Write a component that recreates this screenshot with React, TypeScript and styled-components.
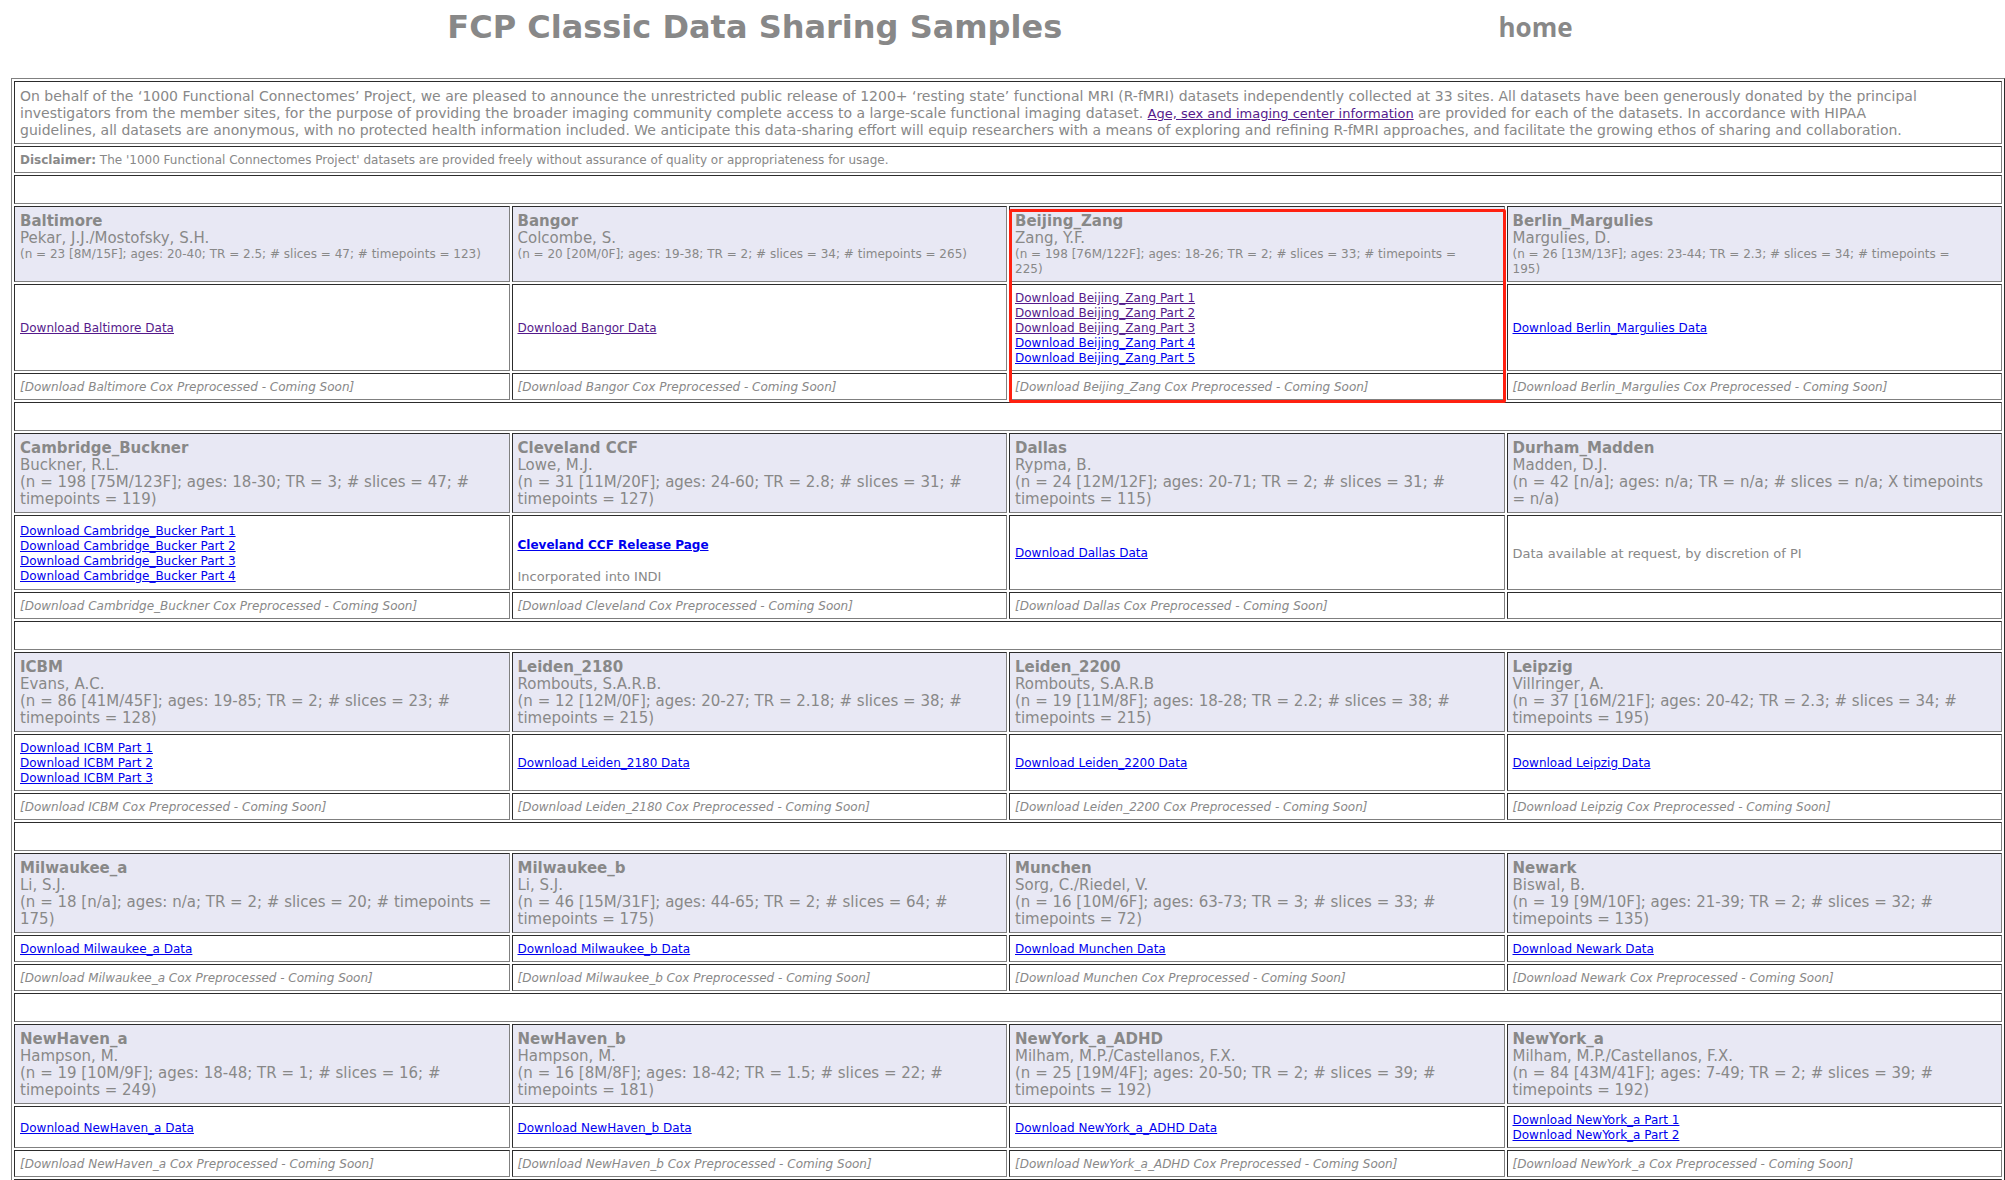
import React from "react";
import styled, { createGlobalStyle } from "styled-components";

const ink = "#888888";
const dark = "#2c2c2c";
const light = "#808080";

const GlobalStyle = createGlobalStyle`
  body {
    margin: 0;
    background: #ffffff;
    color: ${ink};
    font-family: Verdana, "DejaVu Sans", sans-serif;
    font-size: 14px;
    line-height: 17px;
  }
`;

const Page = styled.main`
  height: 100vh;
  box-sizing: border-box;
  padding-left: 11px;
  overflow-y: auto;
  scrollbar-width: none;
`;

const Header = styled.header`
  display: grid;
  grid-template-columns: 74.6% 1fr;
  align-items: center;
  height: 53px;
  margin-bottom: 25px;
`;

const Title = styled.h1`
  margin: 0;
  text-align: center;
  font-size: 32px;
  line-height: 40px;
`;

const HomeLink = styled.a`
  color: ${ink};
  font-family: "Open Sans", sans-serif;
  font-size: 26px;
  font-weight: 700;
  line-height: 40px;
  text-decoration: none;
`;

const Sites = styled.table`
  width: 100%;
  table-layout: fixed;
  border: 1px solid;
  border-color: ${light} ${dark} ${dark} ${light};
  border-collapse: separate;
  border-spacing: 2px;
`;

const Cell = styled.td`
  padding: 6px 5px 4px;
  border: 1px solid;
  border-color: ${dark} ${light} ${light} ${dark};
  vertical-align: middle;
`;

const Small = styled.div`
  font-size: 12px;
  line-height: 15px;
`;

const Spacer = styled(Cell)`
  height: 17px;
`;

const SiteCell = styled(Cell).attrs({ as: "th", scope: "col" })`
  position: relative;
  background: #e8e8f4;
  font-size: 15px;
  font-weight: 400;
  text-align: left;
  vertical-align: top;
`;

const Details = styled.div<{ $small?: boolean }>`
  font-size: ${(p) => (p.$small ? 12 : 15)}px;
  line-height: ${(p) => (p.$small ? 15 : 17)}px;
  white-space: pre-line;
`;

const Highlight = styled.span`
  position: absolute;
  top: 2px;
  left: -1px;
  right: -2px;
  height: 188px;
  border: 3px solid #ff2010;
  border-radius: 2px;
  pointer-events: none;
`;

const Link = styled.a<{ $visited?: boolean }>`
  color: ${(p) => (p.$visited ? "#551a8b" : "#0000ee")};
  text-decoration: underline;
`;

const InlineLink = styled(Link)`
  font-size: 13px;
`;

const DownloadLink = styled(Link)`
  display: block;
  width: fit-content;
  font-size: 12px;
  line-height: 15px;
`;

const Note = styled.div`
  font-size: 13px;
  line-height: 16px;
`;

const Release = styled(Note)`
  padding-top: 15px;
`;

const ReleaseLink = styled(DownloadLink)`
  margin-bottom: 16px;
  font-weight: 700;
  line-height: 16px;
`;

const Pending = styled.em`
  display: block;
  font-size: 12px;
  line-height: 15px;
`;

type Site = {
  name: string;
  pi: string;
  info: string;
  links?: string[];
  visited?: number;
  kind?: "release" | "request";
  marked?: boolean;
};

const parts = (label: string, count: number) =>
  Array.from({ length: count }, (_, i) => `Download ${label} Part ${i + 1}`);

const groups: { small?: boolean; sites: Site[] }[] = [
  {
    small: true,
    sites: [
      { name: "Baltimore", pi: "Pekar, J.J./Mostofsky, S.H.", info: "(n = 23 [8M/15F]; ages: 20-40; TR = 2.5; # slices = 47; # timepoints = 123)", visited: 1 },
      { name: "Bangor", pi: "Colcombe, S.", info: "(n = 20 [20M/0F]; ages: 19-38; TR = 2; # slices = 34; # timepoints = 265)", visited: 1 },
      { name: "Beijing_Zang", pi: "Zang, Y.F.", info: "(n = 198 [76M/122F]; ages: 18-26; TR = 2; # slices = 33; # timepoints =\n225)", links: parts("Beijing_Zang", 5), visited: 3, marked: true },
      { name: "Berlin_Margulies", pi: "Margulies, D.", info: "(n = 26 [13M/13F]; ages: 23-44; TR = 2.3; # slices = 34; # timepoints =\n195)" },
    ],
  },
  {
    sites: [
      { name: "Cambridge_Buckner", pi: "Buckner, R.L.", info: "(n = 198 [75M/123F]; ages: 18-30; TR = 3; # slices = 47; #\ntimepoints = 119)", links: parts("Cambridge_Bucker", 4) },
      { name: "Cleveland CCF", pi: "Lowe, M.J.", info: "(n = 31 [11M/20F]; ages: 24-60; TR = 2.8; # slices = 31; #\ntimepoints = 127)", kind: "release" },
      { name: "Dallas", pi: "Rypma, B.", info: "(n = 24 [12M/12F]; ages: 20-71; TR = 2; # slices = 31; #\ntimepoints = 115)" },
      { name: "Durham_Madden", pi: "Madden, D.J.", info: "(n = 42 [n/a]; ages: n/a; TR = n/a; # slices = n/a; X timepoints\n= n/a)", kind: "request" },
    ],
  },
  {
    sites: [
      { name: "ICBM", pi: "Evans, A.C.", info: "(n = 86 [41M/45F]; ages: 19-85; TR = 2; # slices = 23; #\ntimepoints = 128)", links: parts("ICBM", 3) },
      { name: "Leiden_2180", pi: "Rombouts, S.A.R.B.", info: "(n = 12 [12M/0F]; ages: 20-27; TR = 2.18; # slices = 38; #\ntimepoints = 215)" },
      { name: "Leiden_2200", pi: "Rombouts, S.A.R.B", info: "(n = 19 [11M/8F]; ages: 18-28; TR = 2.2; # slices = 38; #\ntimepoints = 215)" },
      { name: "Leipzig", pi: "Villringer, A.", info: "(n = 37 [16M/21F]; ages: 20-42; TR = 2.3; # slices = 34; #\ntimepoints = 195)" },
    ],
  },
  {
    sites: [
      { name: "Milwaukee_a", pi: "Li, S.J.", info: "(n = 18 [n/a]; ages: n/a; TR = 2; # slices = 20; # timepoints =\n175)" },
      { name: "Milwaukee_b", pi: "Li, S.J.", info: "(n = 46 [15M/31F]; ages: 44-65; TR = 2; # slices = 64; #\ntimepoints = 175)" },
      { name: "Munchen", pi: "Sorg, C./Riedel, V.", info: "(n = 16 [10M/6F]; ages: 63-73; TR = 3; # slices = 33; #\ntimepoints = 72)" },
      { name: "Newark", pi: "Biswal, B.", info: "(n = 19 [9M/10F]; ages: 21-39; TR = 2; # slices = 32; #\ntimepoints = 135)" },
    ],
  },
  {
    sites: [
      { name: "NewHaven_a", pi: "Hampson, M.", info: "(n = 19 [10M/9F]; ages: 18-48; TR = 1; # slices = 16; #\ntimepoints = 249)" },
      { name: "NewHaven_b", pi: "Hampson, M.", info: "(n = 16 [8M/8F]; ages: 18-42; TR = 1.5; # slices = 22; #\ntimepoints = 181)" },
      { name: "NewYork_a_ADHD", pi: "Milham, M.P./Castellanos, F.X.", info: "(n = 25 [19M/4F]; ages: 20-50; TR = 2; # slices = 39; #\ntimepoints = 192)" },
      { name: "NewYork_a", pi: "Milham, M.P./Castellanos, F.X.", info: "(n = 84 [43M/41F]; ages: 7-49; TR = 2; # slices = 39; #\ntimepoints = 192)", links: parts("NewYork_a", 2) },
    ],
  },
];

function Downloads({ site }: { site: Site }) {
  if (site.kind === "release") {
    return (
      <Release>
        <ReleaseLink href="#cleveland">Cleveland CCF Release Page</ReleaseLink>
        Incorporated into INDI
      </Release>
    );
  }
  if (site.kind === "request") {
    return <Note>Data available at request, by discretion of PI</Note>;
  }
  const links = site.links ?? [`Download ${site.name} Data`];
  return (
    <>
      {links.map((label, i) => (
        <DownloadLink key={label} href={`#${site.name}`} $visited={i < (site.visited ?? 0)}>
          {label}
        </DownloadLink>
      ))}
    </>
  );
}

const pendingName = (name: string) => name.replace(" CCF", "");

export default function App() {
  return (
    <Page>
      <GlobalStyle />
      <Header>
        <Title>FCP Classic Data Sharing Samples</Title>
        <HomeLink href="#home">home</HomeLink>
      </Header>
      <Sites>
        <tbody>
          <tr>
            <Cell colSpan={4}>
              On behalf of the ‘1000 Functional Connectomes’ Project, we are pleased to announce the
              unrestricted public release of 1200+ ‘resting state’ functional MRI (R-fMRI) datasets
              independently collected at 33 sites. All datasets have been generously donated by the
              principal
              <br />
              investigators from the member sites, for the purpose of providing the broader imaging
              community complete access to a large-scale functional imaging dataset.{" "}
              <InlineLink href="#info" $visited>
                Age, sex and imaging center information
              </InlineLink>{" "}
              are provided for each of the datasets. In accordance with HIPAA
              <br />
              guidelines, all datasets are anonymous, with no protected health information included.
              We anticipate this data-sharing effort will equip researchers with a means of exploring
              and refining R-fMRI approaches, and facilitate the growing ethos of sharing and
              collaboration.
            </Cell>
          </tr>
          <tr>
            <Cell colSpan={4}>
              <Small>
                <b>Disclaimer:</b> The '1000 Functional Connectomes Project' datasets are provided
                freely without assurance of quality or appropriateness for usage.
              </Small>
            </Cell>
          </tr>
          {groups.map((group) => (
            <React.Fragment key={group.sites[0].name}>
              <tr>
                <Spacer colSpan={4} />
              </tr>
              <tr>
                {group.sites.map((site) => (
                  <SiteCell key={site.name}>
                    <b>{site.name}</b>
                    <div>{site.pi}</div>
                    <Details $small={group.small}>{site.info}</Details>
                    {site.marked && <Highlight />}
                  </SiteCell>
                ))}
              </tr>
              <tr>
                {group.sites.map((site) => (
                  <Cell key={site.name}>
                    <Downloads site={site} />
                  </Cell>
                ))}
              </tr>
              <tr>
                {group.sites.map((site) => (
                  <Cell key={site.name}>
                    {site.kind !== "request" && (
                      <Pending>[Download {pendingName(site.name)} Cox Preprocessed - Coming Soon]</Pending>
                    )}
                  </Cell>
                ))}
              </tr>
            </React.Fragment>
          ))}
          <tr>
            <Spacer colSpan={4} />
          </tr>
        </tbody>
      </Sites>
    </Page>
  );
}
